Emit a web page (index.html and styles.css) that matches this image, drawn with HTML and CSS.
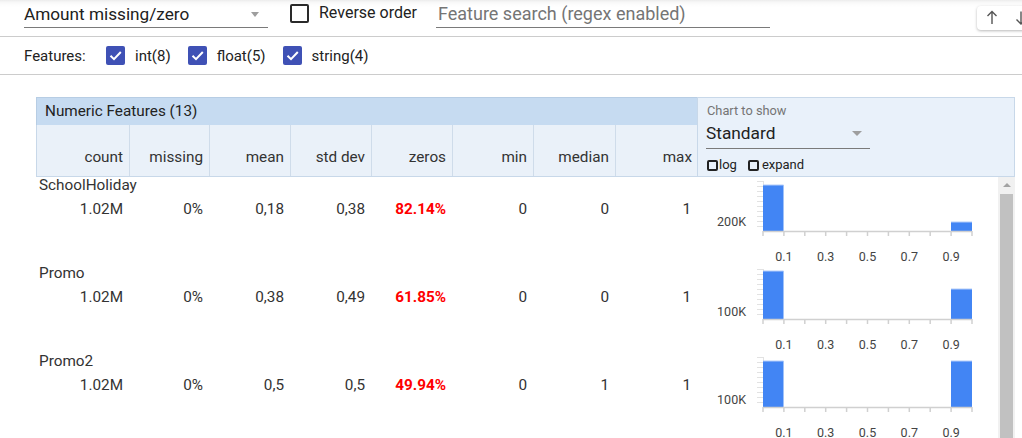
FILE: index.html
```html
<!DOCTYPE html>
<html>
<head>
<meta charset="utf-8">
<link rel="stylesheet" href="styles.css">
</head>
<body>
<div class="toolbar">
  <div class="select"><span>Amount missing/zero</span><i class="caret"></i></div>
  <div class="cb"><span class="box"></span><span>Reverse order</span></div>
  <div class="search">Feature search (regex enabled)</div>
  <div class="sortbtn"><svg width="62" height="24" viewBox="0 0 62 24"><path d="M15 5.5 V18 M10.5 10 L15 5.5 L19.5 10" fill="none" stroke="#555" stroke-width="1.4"/><path d="M44 5.5 V18 M39.5 13.5 L44 18 L48.5 13.5" fill="none" stroke="#555" stroke-width="1.4"/></svg></div>
</div>
<div class="features">
  <span class="flabel">Features:</span>
  <span class="fitem"><span class="fbox"><svg viewBox="0 0 19 19" width="19" height="19"><path d="M4.5 9.8 L8 13.2 L14.8 6" fill="none" stroke="#fff" stroke-width="2"/></svg></span>int(8)</span>
  <span class="fitem"><span class="fbox"><svg viewBox="0 0 19 19" width="19" height="19"><path d="M4.5 9.8 L8 13.2 L14.8 6" fill="none" stroke="#fff" stroke-width="2"/></svg></span>float(5)</span>
  <span class="fitem"><span class="fbox"><svg viewBox="0 0 19 19" width="19" height="19"><path d="M4.5 9.8 L8 13.2 L14.8 6" fill="none" stroke="#fff" stroke-width="2"/></svg></span>string(4)</span>
</div>
<div class="table">
  <div class="thead">
    <div class="thead-left">
      <div class="title">Numeric Features (13)</div>
      <div class="cols">
        <div>count</div><div>missing</div><div>mean</div><div>std dev</div><div>zeros</div><div>min</div><div>median</div><div>max</div>
      </div>
    </div>
    <div class="chart-opts">
      <div class="co-label">Chart to show</div>
      <div class="co-select"><span>Standard</span><i class="caret"></i></div>
      <div class="co-checks"><span class="sbox"></span><span>log</span><span class="sbox sbox2"></span><span>expand</span></div>
    </div>
  </div>
  <div class="tbody">
    <div class="rows">
      <div class="row">
        <div class="row-data">
          <div class="name">SchoolHoliday</div>
          <div class="vals"><div>1.02M</div><div>0%</div><div>0,18</div><div>0,38</div><div class="red">82.14%</div><div>0</div><div>0</div><div>1</div></div>
        </div>
        <svg class="chart" width="301" height="88" viewBox="0 0 301 88">
          <g stroke="#e2e2e2" stroke-width="1">
            <line x1="60" y1="4.5" x2="66" y2="4.5"/><line x1="60" y1="9.5" x2="66" y2="9.5"/><line x1="60" y1="14.5" x2="66" y2="14.5"/><line x1="60" y1="19.5" x2="66" y2="19.5"/><line x1="60" y1="24.5" x2="66" y2="24.5"/><line x1="60" y1="29.5" x2="66" y2="29.5"/><line x1="60" y1="34.5" x2="66" y2="34.5"/><line x1="60" y1="39.5" x2="66" y2="39.5"/><line x1="60" y1="44.5" x2="66" y2="44.5"/><line x1="60" y1="49.5" x2="66" y2="49.5"/>
            <line x1="66.5" y1="4" x2="66.5" y2="54"/>
          </g>
          <rect x="66" y="8" width="20.5" height="46.5" fill="#4285f4"/>
          <rect x="254" y="45" width="21" height="9.5" fill="#4285f4"/>
          <line x1="66" y1="8" x2="86.5" y2="8" stroke="#b3cdf9"/>
          <line x1="254" y1="45" x2="275" y2="45" stroke="#b3cdf9"/>
          <g stroke="#d0d0d0" stroke-width="1.5">
            <line x1="66" y1="54.5" x2="275" y2="54.5"/>
            <line x1="66" y1="54" x2="66" y2="59"/><line x1="86.9" y1="54" x2="86.9" y2="59"/><line x1="107.8" y1="54" x2="107.8" y2="59"/><line x1="128.7" y1="54" x2="128.7" y2="59"/><line x1="149.6" y1="54" x2="149.6" y2="59"/><line x1="170.5" y1="54" x2="170.5" y2="59"/><line x1="191.4" y1="54" x2="191.4" y2="59"/><line x1="212.3" y1="54" x2="212.3" y2="59"/><line x1="233.2" y1="54" x2="233.2" y2="59"/><line x1="254.1" y1="54" x2="254.1" y2="59"/><line x1="275" y1="54" x2="275" y2="59"/>
          </g>
          <g class="ct" text-anchor="middle">
            <text x="86.9" y="84">0.1</text><text x="128.7" y="84">0.3</text><text x="170.5" y="84">0.5</text><text x="212.3" y="84">0.7</text><text x="254.1" y="84">0.9</text>
          </g>
          <text class="ct" x="49" y="48.5" text-anchor="end">200K</text>
        </svg>
      </div>
      <div class="row">
        <div class="row-data">
          <div class="name">Promo</div>
          <div class="vals"><div>1.02M</div><div>0%</div><div>0,38</div><div>0,49</div><div class="red">61.85%</div><div>0</div><div>0</div><div>1</div></div>
        </div>
        <svg class="chart" width="301" height="88" viewBox="0 0 301 88">
          <g stroke="#e2e2e2" stroke-width="1">
            <line x1="60" y1="4.5" x2="66" y2="4.5"/><line x1="60" y1="9.5" x2="66" y2="9.5"/><line x1="60" y1="14.5" x2="66" y2="14.5"/><line x1="60" y1="19.5" x2="66" y2="19.5"/><line x1="60" y1="24.5" x2="66" y2="24.5"/><line x1="60" y1="29.5" x2="66" y2="29.5"/><line x1="60" y1="34.5" x2="66" y2="34.5"/><line x1="60" y1="39.5" x2="66" y2="39.5"/><line x1="60" y1="44.5" x2="66" y2="44.5"/><line x1="60" y1="49.5" x2="66" y2="49.5"/>
            <line x1="66.5" y1="4" x2="66.5" y2="54"/>
          </g>
          <rect x="66" y="6" width="20.5" height="48.5" fill="#4285f4"/>
          <rect x="254" y="24" width="21" height="30.5" fill="#4285f4"/>
          <line x1="66" y1="6" x2="86.5" y2="6" stroke="#b3cdf9"/>
          <line x1="254" y1="24" x2="275" y2="24" stroke="#b3cdf9"/>
          <g stroke="#d0d0d0" stroke-width="1.5">
            <line x1="66" y1="54.5" x2="275" y2="54.5"/>
            <line x1="66" y1="54" x2="66" y2="59"/><line x1="86.9" y1="54" x2="86.9" y2="59"/><line x1="107.8" y1="54" x2="107.8" y2="59"/><line x1="128.7" y1="54" x2="128.7" y2="59"/><line x1="149.6" y1="54" x2="149.6" y2="59"/><line x1="170.5" y1="54" x2="170.5" y2="59"/><line x1="191.4" y1="54" x2="191.4" y2="59"/><line x1="212.3" y1="54" x2="212.3" y2="59"/><line x1="233.2" y1="54" x2="233.2" y2="59"/><line x1="254.1" y1="54" x2="254.1" y2="59"/><line x1="275" y1="54" x2="275" y2="59"/>
          </g>
          <g class="ct" text-anchor="middle">
            <text x="86.9" y="84">0.1</text><text x="128.7" y="84">0.3</text><text x="170.5" y="84">0.5</text><text x="212.3" y="84">0.7</text><text x="254.1" y="84">0.9</text>
          </g>
          <text class="ct" x="49" y="50.5" text-anchor="end">100K</text>
        </svg>
      </div>
      <div class="row">
        <div class="row-data">
          <div class="name">Promo2</div>
          <div class="vals"><div>1.02M</div><div>0%</div><div>0,5</div><div>0,5</div><div class="red">49.94%</div><div>0</div><div>1</div><div>1</div></div>
        </div>
        <svg class="chart" width="301" height="88" viewBox="0 0 301 88">
          <g stroke="#e2e2e2" stroke-width="1">
            <line x1="60" y1="4.5" x2="66" y2="4.5"/><line x1="60" y1="9.5" x2="66" y2="9.5"/><line x1="60" y1="14.5" x2="66" y2="14.5"/><line x1="60" y1="19.5" x2="66" y2="19.5"/><line x1="60" y1="24.5" x2="66" y2="24.5"/><line x1="60" y1="29.5" x2="66" y2="29.5"/><line x1="60" y1="34.5" x2="66" y2="34.5"/><line x1="60" y1="39.5" x2="66" y2="39.5"/><line x1="60" y1="44.5" x2="66" y2="44.5"/><line x1="60" y1="49.5" x2="66" y2="49.5"/>
            <line x1="66.5" y1="4" x2="66.5" y2="54"/>
          </g>
          <rect x="66" y="8" width="20.5" height="46.5" fill="#4285f4"/>
          <rect x="254" y="8" width="21" height="46.5" fill="#4285f4"/>
          <line x1="66" y1="8" x2="86.5" y2="8" stroke="#b3cdf9"/>
          <line x1="254" y1="8" x2="275" y2="8" stroke="#b3cdf9"/>
          <g stroke="#d0d0d0" stroke-width="1.5">
            <line x1="66" y1="54.5" x2="275" y2="54.5"/>
            <line x1="66" y1="54" x2="66" y2="59"/><line x1="86.9" y1="54" x2="86.9" y2="59"/><line x1="107.8" y1="54" x2="107.8" y2="59"/><line x1="128.7" y1="54" x2="128.7" y2="59"/><line x1="149.6" y1="54" x2="149.6" y2="59"/><line x1="170.5" y1="54" x2="170.5" y2="59"/><line x1="191.4" y1="54" x2="191.4" y2="59"/><line x1="212.3" y1="54" x2="212.3" y2="59"/><line x1="233.2" y1="54" x2="233.2" y2="59"/><line x1="254.1" y1="54" x2="254.1" y2="59"/><line x1="275" y1="54" x2="275" y2="59"/>
          </g>
          <g class="ct" text-anchor="middle">
            <text x="86.9" y="84">0.1</text><text x="128.7" y="84">0.3</text><text x="170.5" y="84">0.5</text><text x="212.3" y="84">0.7</text><text x="254.1" y="84">0.9</text>
          </g>
          <text class="ct" x="49" y="50.5" text-anchor="end">100K</text>
        </svg>
      </div>
    </div>
    <div class="scrollbar"><i class="sb-up"></i><div class="sb-thumb"></div></div>
  </div>
</div>
</body>
</html>
```
FILE: styles.css
```css
html, body {
  margin: 0;
  padding: 0;
  background: #ffffff;
  overflow: hidden;
  width: 1022px;
  height: 438px;
}
body {
  font-family: Roboto, "Liberation Sans", Arial, sans-serif;
  color: #212121;
}
.toolbar {
  height: 36px;
  border-bottom: 1px solid #cccccc;
  display: flex;
  align-items: flex-start;
  padding-left: 24px;
  background: linear-gradient(to bottom, #ececec 0px, #f7f7f7 2px, #fdfdfd 5px, #ffffff 8px);
  box-sizing: content-box;
  position: relative;
}
.select {
  width: 244px;
  height: 28px;
  box-sizing: border-box;
  border-bottom: 1px solid #7a7a7a;
  display: flex;
  justify-content: space-between;
  align-items: flex-start;
  padding-right: 9px;
  font-size: 17.2px;
  line-height: 22px;
  padding-top: 3px;
  color: #212121;
}
.caret {
  display: block;
  width: 0;
  height: 0;
  border-left: 4.5px solid transparent;
  border-right: 4.5px solid transparent;
  border-top: 5px solid #9e9e9e;
  margin-top: 9px;
}
.cb {
  width: 142px;
  margin-left: 22px;
  display: flex;
  align-items: flex-start;
  font-size: 16px;
  line-height: 18px;
  color: #222;
}
.cb .box {
  width: 19px;
  height: 19px;
  box-sizing: border-box;
  border: 2px solid #2a2a2a;
  border-radius: 2px;
  margin-top: 4px;
  margin-right: 10px;
  flex: none;
}
.cb span:last-child {
  margin-top: 4px;
}
.search {
  width: 334px;
  height: 28px;
  box-sizing: border-box;
  border-bottom: 1px solid #7a7a7a;
  margin-left: 4px;
  padding-left: 2px;
  padding-top: 3px;
  font-size: 18px;
  line-height: 22px;
  color: #757575;
}
.sortbtn {
  margin-left: auto;
  margin-right: -17px;
  margin-top: 6px;
  width: 62px;
  height: 24px;
  background: #fff;
  border-radius: 4px;
  box-shadow: 0 1px 3px rgba(0,0,0,0.28);
}
.sortbtn svg {
  display: block;
}
.features {
  height: 37px;
  border-bottom: 1px solid #cccccc;
  display: flex;
  align-items: center;
  padding-left: 24px;
  font-size: 15px;
  color: #222;
}
.flabel {
  width: 82px;
}
.fitem {
  display: flex;
  align-items: center;
  margin-right: 17px;
}
.fbox {
  width: 19px;
  height: 19px;
  background: #3f51b5;
  border-radius: 2px;
  margin-right: 10px;
  display: block;
}
.fbox svg {
  display: block;
}
.table {
  margin-top: 22px;
  margin-left: 36px;
  width: 979px;
  font-family: Roboto, "Liberation Sans", Arial, sans-serif;
  font-size: 15.3px;
  color: #333;
}
.thead {
  display: flex;
  height: 80px;
}
.thead-left {
  width: 661px;
}
.title {
  height: 28px;
  box-sizing: border-box;
  background: #c6dbf1;
  border-top: 1px solid #b7cde4;
  border-left: 1px solid #b7cde4;
  padding-left: 8px;
  line-height: 27px;
  color: #222;
}
.cols {
  height: 52px;
  box-sizing: border-box;
  display: grid;
  grid-template-columns: 93px 80px 81px 81px 81px 81px 82px 82px;
  background: #eaf1f9;
  border-bottom: 1px solid #c8d8e9;
  border-left: 1px solid #c8d8e9;
}
.cols div {
  border-right: 1px solid #cfdcea;
  text-align: right;
  padding-right: 6px;
  padding-top: 22px;
  line-height: 20px;
  color: #333;
}
.cols div:last-child {
  border-right: none;
}
.chart-opts {
  width: 318px;
  height: 80px;
  box-sizing: border-box;
  background: #e9f1fa;
  border: 1px solid #c8d8e9;
  padding-left: 9px;
}
.co-label {
  font-size: 12.8px;
  color: #757575;
  line-height: 14px;
  padding-top: 6px;
}
.co-select {
  width: 164px;
  height: 31px;
  box-sizing: border-box;
  border-bottom: 1px solid #7a7a7a;
  display: flex;
  justify-content: space-between;
  padding-right: 8px;
  padding-top: 5px;
  font-size: 17.3px;
  line-height: 20px;
  color: #212121;
  margin-left: -1px;
}
.co-select .caret {
  margin-top: 8px;
  border-left-width: 5px;
  border-right-width: 5px;
}
.co-checks {
  display: flex;
  align-items: center;
  margin-top: 9px;
  font-size: 13px;
  line-height: 14px;
  color: #222;
}
.sbox {
  width: 11px;
  height: 11px;
  box-sizing: border-box;
  border: 2px solid #222;
  border-radius: 2px;
  margin-right: 1px;
}
.sbox2 {
  margin-left: 11px;
  margin-right: 3px;
}
.tbody {
  display: flex;
  height: 262px;
  overflow: hidden;
}
.rows {
  width: 962px;
}
.row {
  display: flex;
  height: 88px;
}
.row-data {
  width: 661px;
}
.name {
  padding-left: 3px;
  line-height: 17px;
  color: #333;
}
.vals {
  display: grid;
  grid-template-columns: 93px 80px 81px 81px 81px 81px 82px 82px;
  margin-top: 6px;
  line-height: 18px;
}
.vals div {
  text-align: right;
  padding-right: 6px;
  color: #333;
}
.vals .red {
  color: #ff0000;
  font-weight: bold;
}
.chart {
  display: block;
  flex: none;
}
.ct {
  font-family: Roboto, "Liberation Sans", Arial, sans-serif;
  font-size: 12.5px;
  fill: #444;
}
.scrollbar {
  width: 17px;
  background: #f1f1f1;
  display: flex;
  flex-direction: column;
  align-items: center;
}
.sb-up {
  display: block;
  width: 0;
  height: 0;
  border-left: 4px solid transparent;
  border-right: 4px solid transparent;
  border-bottom: 4px solid #a3a3a3;
  margin-top: 6px;
}
.sb-thumb {
  width: 13px;
  flex: 1;
  background: #c1c1c1;
  margin-top: 7px;
}
```
